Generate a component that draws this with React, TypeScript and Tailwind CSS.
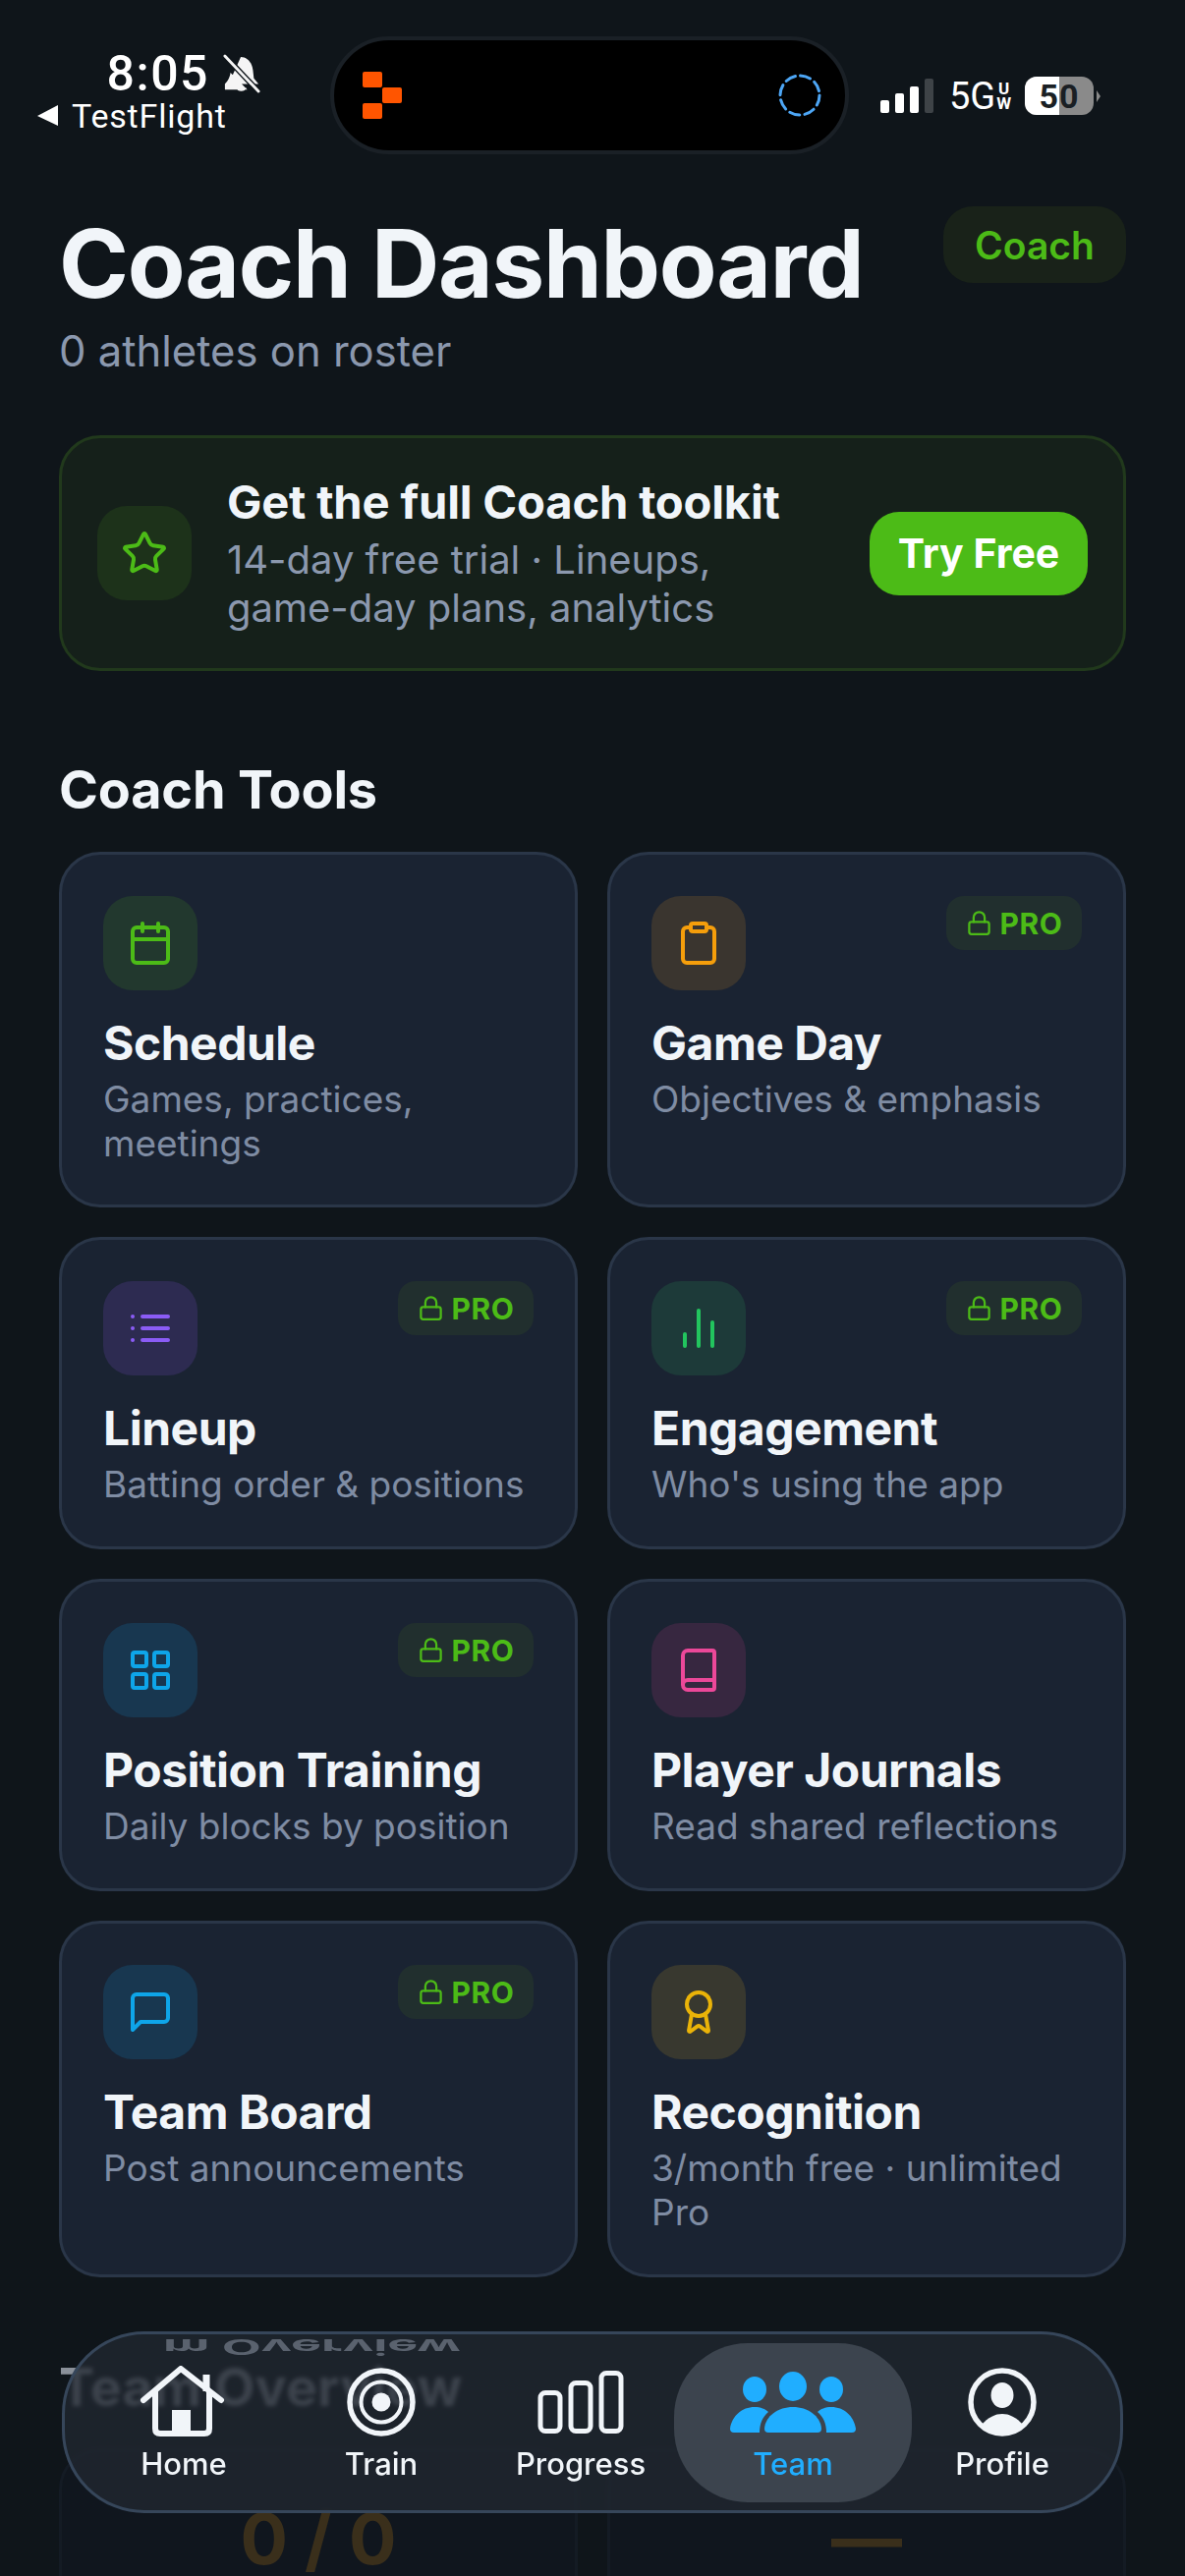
import React from "react";
import { Lock, Star, Calendar, Clipboard, BarChart2, LayoutGrid, Book, Award } from "lucide-react";

const font = { fontFamily: "Inter, sans-serif" };
const roboto = { fontFamily: "Roboto, sans-serif" };

function Pro() {
  return (
    <div className="flex h-[55px] w-[138px] items-center justify-center gap-[8px] rounded-[18px] bg-[#212f2e]">
      <Lock size={27} strokeWidth={2} color="#4cbb17" />
      <span className="text-[30px] font-bold leading-none tracking-[0.5px] text-[#4cbb17]">PRO</span>
    </div>
  );
}

function ListIcon() {
  return (
    <svg width="48" height="48" viewBox="0 0 24 24" fill="none" stroke="#8b5cf6" strokeWidth="2" strokeLinecap="round">
      <path d="M8 6h13M8 12h13M8 18h13M3 6h.01M3 12h.01M3 18h.01" />
    </svg>
  );
}

function ChatIcon() {
  return (
    <svg width="48" height="48" viewBox="0 0 24 24" fill="none" stroke="#0ea5e9" strokeWidth="2" strokeLinecap="round" strokeLinejoin="round">
      <path d="M21 15a2 2 0 0 1-2 2H7l-4 4V5a2 2 0 0 1 2-2h14a2 2 0 0 1 2 2z" />
    </svg>
  );
}

type CardProps = {
  title: string;
  desc: string;
  icon: React.ReactNode;
  tint: string;
  pro?: boolean;
  h: string;
};

function Card({ title, desc, icon, tint, pro, h }: CardProps) {
  return (
    <div className={`${h} flex flex-col rounded-[42px] border-[3px] border-[#2a3648] bg-[#1a2332] px-[42px] pt-[42px]`}>
      <div className="flex items-start justify-between">
        <div className={`flex h-[96px] w-[96px] items-center justify-center rounded-[30px] ${tint}`}>{icon}</div>
        {pro ? <Pro /> : null}
      </div>
      <div className="mt-[24px] text-[48px] font-bold leading-[60px] tracking-[-0.5px] text-[#f1f5f9]">{title}</div>
      <div className="mt-[4px] text-[37px] leading-[45px] text-[#7f8ca3]">{desc}</div>
    </div>
  );
}

function NavLabel({ children }: { children: React.ReactNode }) {
  return <div className="mt-[6px] text-[31px] font-medium leading-[36px] text-[#f1f5f9]">{children}</div>;
}

function Nav() {
  const white = "#f1f5f9";
  return (
    <div className="absolute bottom-[64px] left-[63px] flex h-[185px] w-[1080px] items-start overflow-hidden rounded-[84px] border-[3px] border-[#36465a] bg-[#222832bf] pl-[20px] backdrop-blur-[2px]">
      <div aria-hidden className="absolute left-[100px] top-[-15px] whitespace-nowrap text-[52px] font-bold leading-[54px] text-[#5a626e]" style={{ transform: "scaleY(-0.4)" }}>
        m Overview
      </div>
      <div className="relative flex w-[202px] flex-col items-center pt-[32px]">
        <svg width="90" height="76" viewBox="0 0 90 76" fill="none" stroke={white} strokeWidth="6">
          <path d="M4 35 L42 3 L83 35" strokeLinecap="round" strokeLinejoin="round" />
          <path d="M16 26 V64 Q16 69 21 69 H66 Q71 69 71 64 V26" />
          <path d="M68 9 V26" strokeWidth="7" />
          <rect x="33" y="45" width="19" height="24" fill={white} stroke="none" />
        </svg>
        <NavLabel>Home</NavLabel>
      </div>
      <div className="relative flex w-[200px] flex-col items-center pt-[32px]">
        <svg width="72" height="76" viewBox="0 0 72 76" fill="none" stroke={white}>
          <circle cx="36" cy="37" r="32" strokeWidth="5.5" />
          <circle cx="36" cy="37" r="20.5" strokeWidth="4" />
          <circle cx="36" cy="37" r="9.5" fill={white} stroke="none" />
        </svg>
        <NavLabel>Train</NavLabel>
      </div>
      <div className="relative ml-[4px] flex w-[198px] flex-col items-center pt-[32px]">
        <svg width="88" height="76" viewBox="0 0 88 76" fill="none" stroke={white} strokeWidth="5">
          <rect x="3" y="27.5" width="20" height="39" rx="5" />
          <rect x="34" y="17.5" width="20" height="49" rx="5" />
          <rect x="65" y="7.5" width="20" height="59" rx="5" />
        </svg>
        <NavLabel>Progress</NavLabel>
      </div>
      <div className="relative ml-[-4px] mt-[9px] flex h-[162px] w-[242px] flex-col items-center rounded-[75px] bg-[#3c444e] pt-[23px]">
        <svg width="128" height="76" viewBox="0 0 128 76" fill="#20aeff">
          <ellipse cx="64" cy="21" rx="14" ry="15" />
          <ellipse cx="25" cy="24" rx="12" ry="13" />
          <ellipse cx="103" cy="24" rx="12" ry="13" />
          <path d="M35 64 C36 51 49 42 64 42 C79 42 92 51 93 64 Q93 68 89 68 H39 Q35 68 35 64 Z" />
          <path d="M0 64 C2 51 12 42 25 42 C31 42 36 44 39 47 C33 52 30 59 30 68 H4 Q0 68 0 64 Z" />
          <path d="M128 64 C126 51 116 42 103 42 C97 42 92 44 89 47 C95 52 98 59 98 68 H124 Q128 68 128 64 Z" />
        </svg>
        <div className="mt-[6px] text-[31px] font-medium leading-[36px] text-[#20aeff]">Team</div>
      </div>
      <div className="relative flex w-[184px] flex-col items-center pt-[32px]">
        <svg width="72" height="76" viewBox="0 0 72 76" fill="none">
          <circle cx="36" cy="37" r="32" stroke={white} strokeWidth="5.5" />
          <ellipse cx="36" cy="30" rx="11.5" ry="13" fill={white} />
          <path d="M14 61 C22 52 29 49 36 49 C43 49 50 52 58 61 A32 32 0 0 1 14 61 Z" fill={white} />
        </svg>
        <NavLabel>Profile</NavLabel>
      </div>
    </div>
  );
}

export default function App() {
  return (
    <div className="relative h-[2622px] w-[1206px] overflow-hidden bg-[#0f151a]" style={font}>
      {/* Status bar */}
      <div className="flex h-[200px] items-start pt-[37px]">
        <div className="w-[336px] shrink-0 pt-[14px]">
          <div className="flex items-center justify-end pr-[71px]">
            <span className="text-[50px] font-medium leading-[48px] tracking-[1.5px] text-white" style={roboto}>8:05</span>
            <svg className="ml-[14px]" width="38" height="40" viewBox="0 0 40 42" fill="#f5f5f5">
              <path d="M19 3 C26 3 31 9 32 17 L33 26 L38 32 H6 Z M2 32 C5 29 7 26 8 20 L26 38 H2 Z M14 36 H25 C24 41 15 41 14 36 Z" />
              <path d="M2 2 L38 40" stroke="#0f151a" strokeWidth="6" />
              <path d="M2 2 L38 40" stroke="#f5f5f5" strokeWidth="3" strokeLinecap="round" />
            </svg>
          </div>
          <div className="mt-[1px] flex items-center pl-[38px]">
            <svg width="22" height="22" viewBox="0 0 22 22" fill="#fff"><path d="M0 11 L21 0 V21 Z" /></svg>
            <span className="ml-[13px] text-[34px] leading-[36px] tracking-[0.8px] text-white" style={roboto}>TestFlight</span>
          </div>
        </div>
        <div className="flex h-[120px] w-[528px] shrink-0 items-center justify-between rounded-[60px] border-[4px] border-[#1a2026] bg-black pl-[29px] pr-[24px]">
          <svg width="42" height="48" viewBox="0 0 42 48" fill="#ff5500">
            <rect x="0" y="0" width="20" height="16" rx="2" />
            <rect x="20" y="16" width="20" height="16" rx="2" />
            <rect x="0" y="32" width="20" height="16" rx="2" />
          </svg>
          <svg width="44" height="44" viewBox="0 0 44 44" fill="none" stroke="#4da6f5" strokeWidth="3">
            <circle cx="22" cy="22" r="20" strokeDasharray="10.5 5.2" strokeLinecap="round" />
          </svg>
        </div>
        <div className="flex items-center pl-[32px] pt-[41px]">
          <div className="flex h-[35px] items-end gap-[6px]">
            <div className="h-[13px] w-[9px] rounded-[2px] bg-white" />
            <div className="h-[20px] w-[9px] rounded-[2px] bg-white" />
            <div className="h-[27px] w-[9px] rounded-[2px] bg-white" />
            <div className="h-[35px] w-[9px] rounded-[2px] bg-[#3e4347]" />
          </div>
          <span className="ml-[16px] text-[38px] leading-none text-white" style={roboto}>5G</span>
          <div className="ml-[1px] flex flex-col items-center text-[17px] font-bold leading-[15px] text-white" style={roboto}>
            <span>U</span>
            <span>W</span>
          </div>
          <div className="relative ml-[14px] flex h-[39px] w-[70px] items-center justify-center overflow-hidden rounded-[12px] bg-[#8a8a8a]">
            <div className="absolute bottom-0 left-0 top-0 w-[35px] bg-white" />
            <span className="relative text-[34px] font-bold leading-none tracking-[1px] text-[#1a1f24]" style={roboto}>50</span>
          </div>
          <div className="ml-[3px] h-0 w-0 border-y-[6px] border-l-[4px] border-y-transparent border-l-[#8a8a8a]" />
        </div>
      </div>

      <div className="px-[60px]">
        {/* Header */}
        <div className="flex items-start justify-between">
          <div>
            <div className="mt-[10px] text-[96px] font-bold leading-[116px] tracking-[-1.27px] text-[#f1f5f9]">Coach Dashboard</div>
            <div className="mt-[7px] text-[43.6px] leading-[50px] text-[#8b98ae]">0 athletes on roster</div>
          </div>
          <div className="mt-[10px] flex h-[78px] w-[186px] items-center justify-center rounded-[30px] bg-[#192219] text-[39px] font-semibold leading-none text-[#4cbb17]">Coach</div>
        </div>

        {/* Upsell */}
        <div className="mt-[60px] flex h-[240px] items-center rounded-[42px] border-[3px] border-[#21391c] bg-[#15201a] px-[36px]">
          <div className="flex h-[96px] w-[96px] shrink-0 items-center justify-center rounded-[30px] bg-[#1d321a]">
            <Star size={48} strokeWidth={2} color="#4cbb17" />
          </div>
          <div className="ml-[36px] min-w-0 flex-1">
            <div className="text-[47.2px] font-bold leading-[56px] tracking-[-0.2px] text-[#f1f5f9]">Get the full Coach toolkit</div>
            <div className="mt-[6px] w-[540px] text-[40px] leading-[49px] text-[#8b98ae]">14-day free trial · Lineups, game-day plans, analytics</div>
          </div>
          <div className="flex h-[85px] w-[222px] shrink-0 items-center justify-center rounded-[30px] bg-[#4cbb17] text-[41px] font-bold leading-none text-white">Try Free</div>
        </div>

        {/* Tools */}
        <div className="mt-[88px] text-[54px] font-bold leading-[66px] tracking-[-0.2px] text-[#f1f5f9]">Coach Tools</div>
        <div className="mt-[30px] grid grid-cols-2 gap-[30px]">
          <Card h="h-[362px]" title="Schedule" desc="Games, practices, meetings" tint="bg-[#22382e]" icon={<Calendar size={48} strokeWidth={2} color="#4cbb17" />} />
          <Card h="h-[362px]" pro title="Game Day" desc="Objectives & emphasis" tint="bg-[#3a352f]" icon={<Clipboard size={48} strokeWidth={2} color="#f59e0b" />} />
          <Card h="h-[318px]" pro title="Lineup" desc="Batting order & positions" tint="bg-[#2d2b51]" icon={<ListIcon />} />
          <Card h="h-[318px]" pro title="Engagement" desc="Who's using the app" tint="bg-[#1d3a39]" icon={<BarChart2 size={48} strokeWidth={2} color="#22c55e" />} />
          <Card h="h-[318px]" pro title="Position Training" desc="Daily blocks by position" tint="bg-[#183750]" icon={<LayoutGrid size={48} strokeWidth={2} color="#0ea5e9" />} />
          <Card h="h-[318px]" title="Player Journals" desc="Read shared reflections" tint="bg-[#372740]" icon={<Book size={48} strokeWidth={2} color="#ec4899" />} />
          <Card h="h-[363px]" pro title="Team Board" desc="Post announcements" tint="bg-[#183750]" icon={<ChatIcon />} />
          <Card h="h-[363px]" title="Recognition" desc="3/month free · unlimited Pro" tint="bg-[#38382f]" icon={<Award size={48} strokeWidth={2} color="#eab308" />} />
        </div>

        {/* Section running under the tab bar */}
        <div className="mt-[79px] text-[54px] font-bold leading-[66px] text-[#8a9099]">Team Overview</div>
        <div className="mt-[29px] grid grid-cols-2 gap-x-[30px]">
          <div className="flex h-[200px] justify-center rounded-t-[42px] border-[3px] border-[#141b24] bg-[#10161e] pt-[53px] text-[72px] font-bold leading-[72px] text-[#3a2f1b]">0 / 0</div>
          <div className="flex h-[200px] justify-center rounded-t-[42px] border-[3px] border-[#141b24] bg-[#10161e] pt-[53px] text-[72px] font-bold leading-[72px] text-[#3a2f1b]">—</div>
        </div>
      </div>

      <Nav />
    </div>
  );
}
